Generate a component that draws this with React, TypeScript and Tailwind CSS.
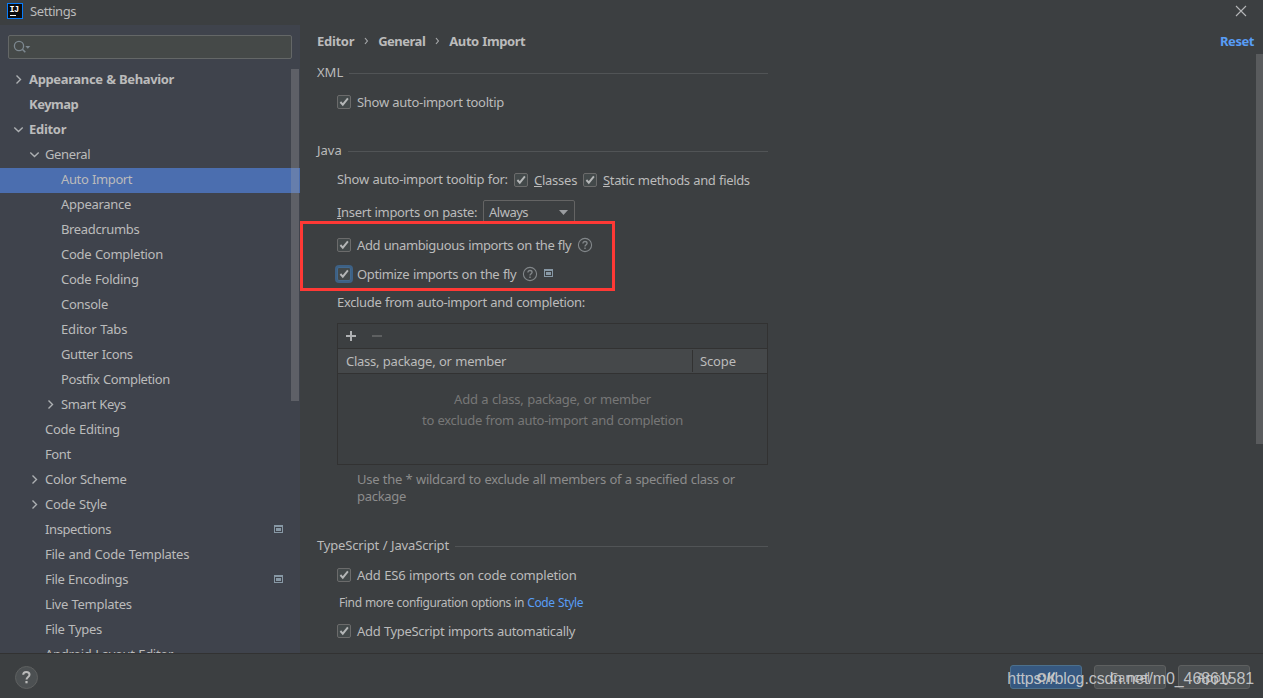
import type { ReactNode } from 'react';

type Arrow = 'open' | 'closed';
type Item = { label: string; track: string; level: 0 | 1 | 2; arrow?: Arrow; bold?: boolean; selected?: boolean; project?: boolean };

const items: Item[] = [
  { label: 'Appearance & Behavior', track: 'tracking-[-0.36px]', level: 0, arrow: 'closed', bold: true },
  { label: 'Keymap', track: 'tracking-[-0.5px]', level: 0, bold: true },
  { label: 'Editor', track: 'tracking-[-0.3px]', level: 0, arrow: 'open', bold: true },
  { label: 'General', track: 'tracking-[-0.38px]', level: 1, arrow: 'open' },
  { label: 'Auto Import', track: 'tracking-[-0.37px]', level: 2, selected: true },
  { label: 'Appearance', track: 'tracking-[-0.3px]', level: 2 },
  { label: 'Breadcrumbs', track: 'tracking-[-0.35px]', level: 2 },
  { label: 'Code Completion', track: 'tracking-[-0.28px]', level: 2 },
  { label: 'Code Folding', track: 'tracking-[-0.25px]', level: 2 },
  { label: 'Console', track: 'tracking-[-0.28px]', level: 2 },
  { label: 'Editor Tabs', track: 'tracking-[-0.17px]', level: 2 },
  { label: 'Gutter Icons', track: 'tracking-[-0.38px]', level: 2 },
  { label: 'Postfix Completion', track: 'tracking-[-0.4px]', level: 2 },
  { label: 'Smart Keys', track: 'tracking-[-0.36px]', level: 2, arrow: 'closed' },
  { label: 'Code Editing', track: 'tracking-[-0.26px]', level: 1 },
  { label: 'Font', track: 'tracking-[-0.4px]', level: 1 },
  { label: 'Color Scheme', track: 'tracking-[-0.27px]', level: 1, arrow: 'closed' },
  { label: 'Code Style', track: 'tracking-[-0.25px]', level: 1, arrow: 'closed' },
  { label: 'Inspections', track: 'tracking-[-0.4px]', level: 1, project: true },
  { label: 'File and Code Templates', track: 'tracking-[-0.25px]', level: 1 },
  { label: 'File Encodings', track: 'tracking-[-0.32px]', level: 1, project: true },
  { label: 'Live Templates', track: 'tracking-[-0.29px]', level: 1 },
  { label: 'File Types', track: 'tracking-[-0.29px]', level: 1 },
  { label: 'Android Layout Editor', track: 'tracking-[-0.3px]', level: 1 },
];

const indents = ['pl-[13px]', 'pl-[29px]', 'pl-[45px]'];

function TreeArrow({ kind }: { kind?: Arrow }) {
  return (
    <svg className="mr-[5px] size-[11px] shrink-0" viewBox="0 0 11 11" fill="none" stroke="#adb0b3" strokeWidth="1.4">
      {kind === 'closed' && <path d="M3.5 1.5 7.5 5.5 3.5 9.5" />}
      {kind === 'open' && <path d="M1.3 3.5 5.5 7.6 9.7 3.5" />}
    </svg>
  );
}

function ProjectIcon() {
  return (
    <svg className="h-[8px] w-[9px] shrink-0" viewBox="0 0 9 8" shapeRendering="crispEdges">
      <path fill="#8798a5" fillRule="evenodd" d="M0 0h9v8H0zM1 2v5h7V2z" />
      <path fill="#8798a5" d="M2 3h5v3H2z" />
    </svg>
  );
}

function Help() {
  return (
    <svg className="size-[16px] shrink-0" viewBox="0 0 16 16" fill="none" stroke="#82878a">
      <circle cx="8" cy="8" r="6.6" strokeWidth="1.1" />
      <path d="M5.9 6.6C5.9 5.2 6.8 4.5 8 4.5S10.1 5.2 10.1 6.3C10.1 7.6 8 7.8 8 9.4" strokeWidth="1.3" />
      <path d="M8 10.4v1.5" strokeWidth="1.4" />
    </svg>
  );
}

function Check({ focused }: { focused?: boolean }) {
  return (
    <span
      className={
        focused
          ? 'size-[14px] shrink-0 rounded-[2px] border border-[#43698e] bg-[#43494a] ring-2 ring-[#3d6185]'
          : 'size-[14px] shrink-0 rounded-[2px] border border-[#6b6b6b] bg-[#43494a]'
      }
    >
      <svg className="size-[12px]" viewBox="0 0 12 12" fill="none" stroke="#b4b6b7" strokeWidth="1.9">
        <path d="M2.4 6 4.8 8.7 9.9 2.3" />
      </svg>
    </span>
  );
}

function Option({ className, children, focused }: { className: string; children: ReactNode; focused?: boolean }) {
  return (
    <div className={`flex h-[18px] items-center pl-[20px] ${className}`}>
      <Check focused={focused} />
      <span className="w-[6px] shrink-0" />
      {children}
    </div>
  );
}

function Section({ title, className }: { title: string; className: string }) {
  return (
    <div className={`flex h-[18px] w-[451px] items-center ${className}`}>
      <span>{title}</span>
      <span className="ml-[6px] mt-[2px] h-px flex-1 bg-[#515456]" />
    </div>
  );
}

function Crumb() {
  return (
    <svg className="ml-[10px] mr-[9px] h-[8px] w-[5px]" viewBox="0 0 5 8" fill="none" stroke="#a4a6a8" strokeWidth="1.2">
      <path d="M1 1 3.4 4 1 7" />
    </svg>
  );
}

function Sidebar() {
  return (
    <aside className="relative flex w-[300px] shrink-0 flex-col overflow-hidden bg-[#3f434c]">
      <div className="mx-[8px] mt-[10px] flex h-[24px] shrink-0 items-center rounded-[2px] border border-[#646767] bg-[#454948] pl-[4px]">
        <svg className="h-[14px] w-[18px]" viewBox="0 0 18 14" fill="none" stroke="#7d8890" strokeWidth="1.3">
          <circle cx="6" cy="6" r="4.6" />
          <path d="M9.3 9.3 12.3 12.3" strokeWidth="1.6" />
          <path d="M12.3 6h5l-2.5 2.7z" fill="#7d8890" stroke="none" />
        </svg>
      </div>
      <div className="mt-[9px] flex flex-col">
        {items.map((it) => (
          <div
            key={it.label}
            className={`flex h-[25px] shrink-0 items-center pb-[3px] pr-[17px] ${indents[it.level]} ${it.bold ? 'font-bold' : ''} ${it.selected ? 'bg-[#4b6eaf]' : ''}`}
          >
            <TreeArrow kind={it.arrow} />
            <span className={`flex-1 whitespace-nowrap ${it.track}`}>{it.label}</span>
            {it.project && <ProjectIcon />}
          </div>
        ))}
      </div>
      <div className="absolute right-[1px] top-[44px] h-[332px] w-[8px] bg-[#a6a6a6]/30" />
    </aside>
  );
}

function Content() {
  return (
    <main className="relative flex flex-1 flex-col overflow-hidden pl-[17px]">
      <div className="mt-[7px] flex h-[18px] shrink-0 items-center font-bold">
        <span className="tracking-[-0.3px]">Editor</span>
        <Crumb />
        <span className="tracking-[-0.5px]">General</span>
        <Crumb />
        <span className="tracking-[-0.42px]">Auto Import</span>
        <span className="ml-auto mr-[9px] tracking-[-0.44px] text-[#589df6]">Reset</span>
      </div>

      <Section title="XML" className="mt-[13px]" />
      <Option className="mt-[12px]"><span className="tracking-[-0.3px]">Show auto-import tooltip</span></Option>

      <Section title="Java" className="mt-[30px]" />
      <div className="mt-[11px] flex h-[18px] items-center pl-[20px]">
        <span className="w-[177px] tracking-[-0.29px]">Show auto-import tooltip for:</span>
        <div className="flex items-center pt-[2px]">
          <Check />
          <span className="ml-[6px] w-[49px] tracking-[-0.25px]"><u className="underline-offset-1">C</u>lasses</span>
          <Check />
          <span className="ml-[6px] tracking-[-0.35px]"><u className="underline-offset-1">S</u>tatic methods and fields</span>
        </div>
      </div>
      <div className="mt-[12px] flex h-[24px] items-center pl-[20px]">
        <span className="w-[146px] tracking-[-0.34px]"><u className="underline-offset-1">I</u>nsert imports on paste:</span>
        <div className="flex h-[24px] w-[92px] items-center justify-between rounded-[2px] border border-[#646464] pl-[5px] pr-[6px]">
          <span className="tracking-[-0.5px]">Always</span>
          <svg className="h-[5px] w-[9px]" viewBox="0 0 9 5"><path d="M0 0h9L4.5 5z" fill="#9a9da0" /></svg>
        </div>
      </div>
      <Option className="mt-[12px]">
        <span className="w-[220px] tracking-[-0.37px]">Add unambiguous imports on the fly</span>
        <Help />
      </Option>
      <Option className="mt-[11px]" focused>
        <span className="w-[165px] tracking-[-0.35px]">Optimize imports on the fly</span>
        <Help />
        <span className="w-[6px]" />
        <span className="pb-[2px]"><ProjectIcon /></span>
      </Option>
      <p className="mt-[10px] h-[18px] pl-[20px] tracking-[-0.33px]">Exclude from auto-import and completion:</p>

      <div className="ml-[20px] mt-[12px] flex h-[142px] w-[431px] shrink-0 flex-col border border-[#323232]">
        <div className="flex h-[24px] items-center gap-[16px] pl-[8px]">
          <svg className="size-[10px]" viewBox="0 0 10 10" shapeRendering="crispEdges"><path d="M0 4h4V0h2v4h4v2H6v4H4V6H0z" fill="#afb1b3" /></svg>
          <span className="h-[2px] w-[10px] bg-[#5e6061]" />
        </div>
        <div className="flex h-[26px] items-center border-y border-[#323232] bg-[#45484a] pl-[8px]">
          <span className="w-[346px] tracking-[-0.26px]">Class, package, or member</span>
          <span className="mr-[7px] h-[22px] w-px bg-[#323232]" />
          <span className="tracking-[-0.15px]">Scope</span>
        </div>
        <div className="mt-[15px] flex flex-col items-center text-[#777777]">
          <p className="h-[21px] leading-[21px] tracking-[-0.23px]">Add a class, package, or member</p>
          <p className="h-[21px] leading-[21px] tracking-[-0.31px]">to exclude from auto-import and completion</p>
        </div>
      </div>
      <p className="ml-[40px] mt-[6px] leading-[17px] tracking-[-0.29px] text-[#8c8c8c]">
        Use the * wildcard to exclude all members of a specified class or<br />package
      </p>

      <Section title="TypeScript / JavaScript" className="mt-[31px] tracking-[-0.17px]" />
      <Option className="mt-[12px]"><span className="tracking-[-0.23px]">Add ES6 imports on code completion</span></Option>
      <p className="mt-[10px] h-[18px] pl-[22px] text-[12px] leading-[18px] tracking-[-0.37px]">
        Find more configuration options in <span className="text-[#589df6]">Code Style</span>
      </p>
      <Option className="mt-[10px]"><span className="tracking-[-0.32px]">Add TypeScript imports automatically</span></Option>

      <div className="absolute left-0 top-[196px] h-[70px] w-[315px] border-[3px] border-[#ff3935]" />
      <div className="absolute right-0 top-[29px] h-[390px] w-[7px] bg-[#595b5d]" />
    </main>
  );
}

export default function App() {
  return (
    <div className="flex h-[698px] w-[1263px] flex-col overflow-hidden whitespace-nowrap bg-[#3c3f41] font-['Noto_Sans',sans-serif] text-[13px] leading-[18px] text-[#bbbbbb] [word-spacing:0.5px]">
      <header className="flex h-[25px] shrink-0 items-center pb-[3px] pl-[7px] pr-[16px]">
        <svg className="size-[16px]" viewBox="0 0 16 16">
          <rect width="16" height="16" fill="#087cfa" />
          <rect x="1" y="1" width="14" height="14" fill="#0b0b0d" />
          <text x="2.6" y="9" fill="#fff" fontFamily="Liberation Mono" fontWeight="700" fontSize="8.5" letterSpacing="-0.6">IJ</text>
          <rect x="3" y="12" width="6" height="1" fill="#fff" />
        </svg>
        <span className="ml-[7px] tracking-[-0.42px]">Settings</span>
        <svg className="ml-auto size-[12px]" viewBox="0 0 12 12" stroke="#b5b7b8" strokeWidth="1.1">
          <path d="M1 1 11 11M11 1 1 11" />
        </svg>
      </header>
      <div className="flex h-[628px] shrink-0">
        <Sidebar />
        <Content />
      </div>
      <footer className="relative flex flex-1 items-center border-t border-[#323232] pl-[15px] pr-[13px]">
        <svg className="mt-[3px] size-[23px]" viewBox="0 0 23 23" fill="none">
          <circle cx="11.5" cy="11.5" r="11" fill="#4c5052" stroke="#5e6060" />
          <path d="M8.2 8.8C8.2 7 9.5 6 11.3 6s3.2 1 3.2 2.7c0 2.2-3 2.3-3 4.9" stroke="#bbbbbb" strokeWidth="2" />
          <path d="M11.5 15v2.3" stroke="#bbbbbb" strokeWidth="2.2" />
        </svg>
        <div className="ml-auto mt-[2px] flex gap-[12px] text-center leading-[22px]">
          <span className="h-[24px] w-[72px] rounded-[3px] border border-[#4c708c] bg-[#365880] font-bold">OK</span>
          <span className="h-[24px] w-[72px] rounded-[3px] border border-[#5e6060] bg-[#4c5052]">Cancel</span>
          <span className="h-[24px] w-[72px] rounded-[3px] border border-[#5e6060] bg-[#4c5052]">Apply</span>
        </div>
        <span className="absolute right-[9px] top-[15px] font-['Liberation_Sans',sans-serif] text-[16px] leading-[20px] tracking-[-0.1px] text-[#d0d1d2]/90">
          https://blog.csdn.net/m0_46861581
        </span>
      </footer>
    </div>
  );
}
